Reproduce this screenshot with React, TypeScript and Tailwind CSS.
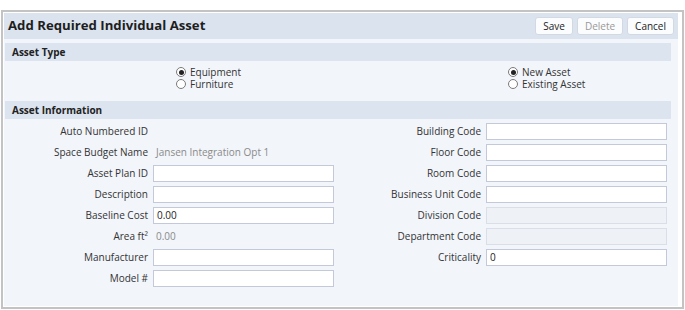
import React from "react";

const font = "font-['Open_Sans','Noto_Sans',sans-serif]";

const Radio: React.FC<{ checked?: boolean; label: string }> = ({ checked, label }) => (
  <div className="flex items-center h-[12px] gap-[4px]">
    <span className="w-[10px] h-[10px] rounded-full border border-[#7a7a7a] bg-white flex items-center justify-center">
      {checked && <span className="w-[5px] h-[5px] rounded-full bg-[#222]" />}
    </span>
    <span className="text-[10px] leading-[11px] text-[#333]">{label}</span>
  </div>
);

type Row = { label: string; kind: "text" | "input" | "disabled" | "none"; value?: string };

const left: Row[] = [
  { label: "Auto Numbered ID", kind: "none" },
  { label: "Space Budget Name", kind: "text", value: "Jansen Integration Opt 1" },
  { label: "Asset Plan ID", kind: "input" },
  { label: "Description", kind: "input" },
  { label: "Baseline Cost", kind: "input", value: "0.00" },
  { label: "Area ft²", kind: "text", value: "0.00" },
  { label: "Manufacturer", kind: "input" },
  { label: "Model #", kind: "input" },
];

const right: Row[] = [
  { label: "Building Code", kind: "input" },
  { label: "Floor Code", kind: "input" },
  { label: "Room Code", kind: "input" },
  { label: "Business Unit Code", kind: "input" },
  { label: "Division Code", kind: "disabled" },
  { label: "Department Code", kind: "disabled" },
  { label: "Criticality", kind: "input", value: "0" },
];

const Field: React.FC<{ row: Row }> = ({ row }) => (
  <div className="flex items-center h-[21px]">
    <div className="w-[148px] text-right text-[10px] text-[#333] pr-[5px] whitespace-nowrap">{row.label}</div>
    {row.kind === "input" && (
      <div className="w-[181px] h-[17px] bg-white border border-[#c4c9d9] flex items-center px-[3px] text-[10px] text-[#222]">
        {row.value}
      </div>
    )}
    {row.kind === "disabled" && (
      <div className="w-[181px] h-[17px] bg-[#eef1f6] border border-[#d9dee7]" />
    )}
    {row.kind === "text" && <div className="pl-[3px] text-[10px] text-[#8a8a8a]">{row.value}</div>}
  </div>
);

const SectionBar: React.FC<{ title: string }> = ({ title }) => (
  <div className="h-[18px] bg-[#dce4f0] flex items-center pl-[7px] text-[10px] font-bold text-[#222]">
    {title}
  </div>
);

const btn = "h-[18px] px-[7px] bg-[#fbfcfd] border border-[#d3d9e3] rounded-[3px] text-[10px] leading-none";

export default function App() {
  return (
    <div className={`w-[685px] h-[310px] bg-white pt-[10px] px-[1px] pb-[1px] ${font}`}>
      <div className="h-full border-2 border-[#c3c3c3] bg-white pt-[1px] pl-[1px] pr-[4px] pb-[1px] flex flex-col">
        {/* header */}
        <div className="h-[26px] bg-[#dbe3ef] flex items-center justify-between pl-[4px] pr-[4px]">
          <span className="text-[13.2px] font-bold text-[#1e1e1e]">Add Required Individual Asset</span>
          <div className="flex gap-[4px]">
            <button className={`${btn} text-[#222]`}>Save</button>
            <button className={`${btn} text-[#999]`}>Delete</button>
            <button className={`${btn} text-[#222]`}>Cancel</button>
          </div>
        </div>

        {/* body */}
        <div className="flex-1 bg-[#f2f5fa] pl-[1px] pr-[7px] pt-[4px]">
          <SectionBar title="Asset Type" />
          <div className="grid grid-cols-2 pt-[5px] h-[40px]">
            <div className="pl-[171px]">
              <Radio checked label="Equipment" />
              <Radio label="Furniture" />
            </div>
            <div className="pl-[170px]">
              <Radio checked label="New Asset" />
              <Radio label="Existing Asset" />
            </div>
          </div>
          <SectionBar title="Asset Information" />
          <div className="grid grid-cols-2 pt-[2px]">
            <div>
              {left.map((r) => (
                <Field key={r.label} row={r} />
              ))}
            </div>
            <div>
              {right.map((r) => (
                <Field key={r.label} row={r} />
              ))}
            </div>
          </div>
        </div>
      </div>
    </div>
  );
}
